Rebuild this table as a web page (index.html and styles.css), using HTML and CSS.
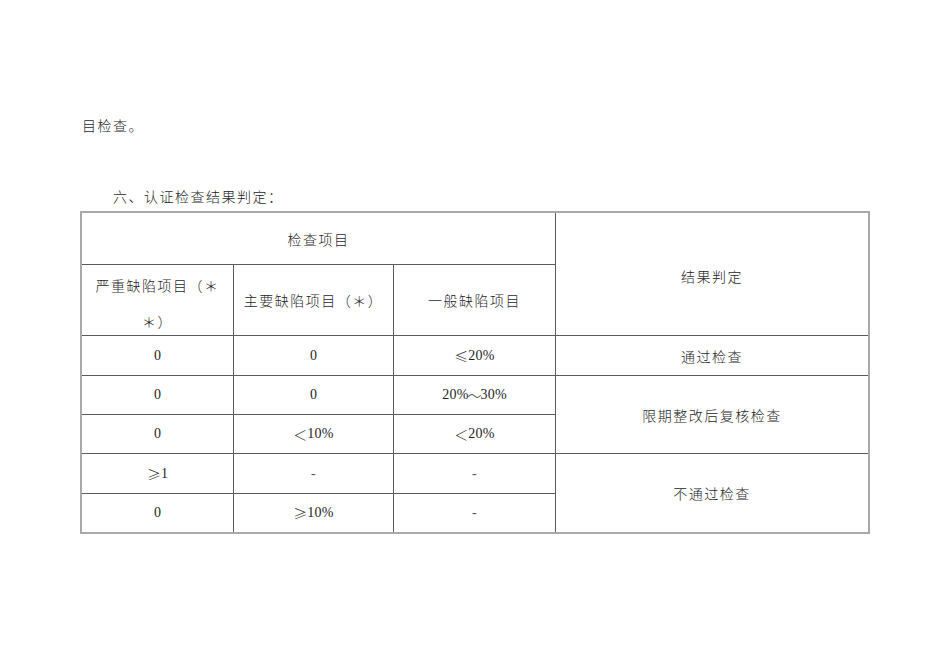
FILE: index.html
```html
<!DOCTYPE html>
<html lang="zh-CN">
<head>
<meta charset="utf-8">
<title>认证检查结果判定</title>
<link rel="stylesheet" href="styles.css">
</head>
<body>
<div class="page">
  <p class="text first">目检查。</p>
  <p class="text heading">六、认证检查结果判定：</p>
  <div class="grid">
    <div class="cell c-items">检查项目</div>
    <div class="cell c-result last-col">结果判定</div>

    <div class="cell tall">严重缺陷项目（＊<br>＊）</div>
    <div class="cell">主要缺陷项目（＊）</div>
    <div class="cell">一般缺陷项目</div>

    <div class="cell"><span class="num">0</span></div>
    <div class="cell"><span class="num">0</span></div>
    <div class="cell"><span class="sym">≤</span><span class="num">20%</span></div>
    <div class="cell last-col">通过检查</div>

    <div class="cell"><span class="num">0</span></div>
    <div class="cell"><span class="num">0</span></div>
    <div class="cell"><span class="num">20%</span><span class="sym tilde">～</span><span class="num">30%</span></div>
    <div class="cell last-col span2">限期整改后复核检查</div>

    <div class="cell"><span class="num">0</span></div>
    <div class="cell"><span class="sym">＜</span><span class="num">10%</span></div>
    <div class="cell"><span class="sym">＜</span><span class="num">20%</span></div>

    <div class="cell"><span class="sym">≥</span><span class="num">1</span></div>
    <div class="cell"><span class="num dash">-</span></div>
    <div class="cell"><span class="num dash">-</span></div>
    <div class="cell last-col span2 last-row">不通过检查</div>

    <div class="cell last-row"><span class="num">0</span></div>
    <div class="cell last-row"><span class="sym">≥</span><span class="num">10%</span></div>
    <div class="cell last-row"><span class="num dash">-</span></div>
  </div>
</div>
</body>
</html>
```

FILE: styles.css
```css
html, body {
  margin: 0;
  padding: 0;
  background: #ffffff;
}

.page {
  padding: 115px 0 0 80px;
  font-family: "Noto Sans CJK SC", "Noto Sans", sans-serif;
  font-size: 14px;
  font-weight: 300;
  color: #1e1e1e;
  letter-spacing: 1.5px;
}

.text {
  margin: 0;
  line-height: 20px;
}

.first {
  padding-left: 2px;
}

.heading {
  margin-top: 51px;
  padding-left: 33px;
}

.grid {
  margin-top: 5px;
  display: grid;
  grid-template-columns: 152px 160px 162px 312px;
  grid-template-rows: 52px 71px 40px 39px 39px 40px 38px;
  width: max-content;
  border: 2px solid #a9a9a9;
}

.cell {
  box-sizing: border-box;
  display: flex;
  align-items: center;
  justify-content: center;
  text-align: center;
  border-right: 1px solid #5a5a5a;
  border-bottom: 1px solid #5a5a5a;
  line-height: 20px;
  padding: 0 6px;
}

.c-items {
  grid-column: 1 / 4;
}

.c-result {
  grid-column: 4;
  grid-row: 1 / 3;
  padding-top: 4px;
}

.tall {
  line-height: 36px;
  padding-top: 6px;
}

.last-col {
  grid-column: 4;
  border-right: none;
}

.span2 {
  grid-row: span 2;
}

.last-row {
  border-bottom: none;
}

.num {
  font-family: "Liberation Serif", "Times New Roman", serif;
  font-weight: 400;
  letter-spacing: 0.2px;
  font-size: 14px;
  vertical-align: -2px;
}

.sym {
  font-family: "Noto Sans CJK SC", sans-serif;
  font-weight: 300;
  letter-spacing: 0;
  vertical-align: -1px;
}

.tilde {
  margin: 0 -1px;
}

.dash {
  color: #555;
}
```
